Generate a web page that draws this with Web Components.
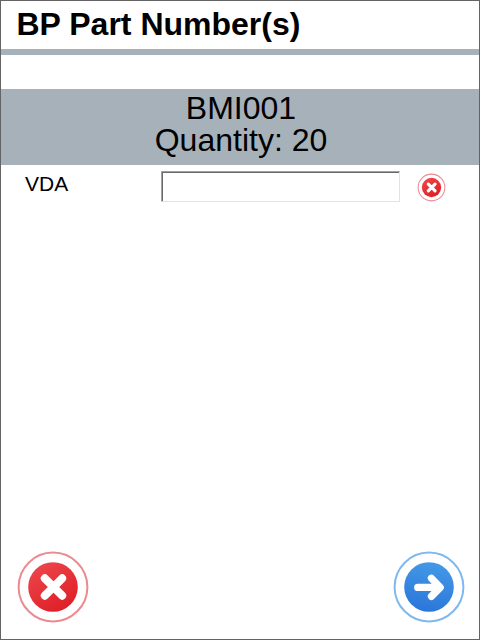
<!DOCTYPE html>
<html lang="en">
<head>
<meta charset="utf-8">
<title>BP Part Number(s)</title>
<style>
html,body{margin:0;height:100%;background:#fff}
body{font-family:"Liberation Sans",Arial,sans-serif;color:#000}
</style>
</head>
<body>
<part-screen>
  <screen-title slot="header">BP Part Number(s)</screen-title>
  <part-summary><span>BMI001</span><span>Quantity: 20</span></part-summary>
  <field-row label="VDA"></field-row>
  <round-button slot="footer" kind="cancel"></round-button>
  <round-button slot="footer" kind="next"></round-button>
</part-screen>
<script>
class Base extends HTMLElement {
  constructor() { super(); this.attachShadow({ mode: "open" }); }
  connectedCallback() { this.shadowRoot.innerHTML = this.render(); }
}
customElements.define("part-screen", class extends Base {
  render() { return `<style>
    :host{display:flex;flex-direction:column;box-sizing:border-box;width:480px;height:640px;border:1px solid #646464;background:#fff;overflow:hidden}
    main{flex:1;padding-top:34px}
    footer{display:flex;justify-content:space-between;padding:0 14px 16px 16px}
    </style><slot name="header"></slot><main><slot></slot></main><footer><slot name="footer"></slot></footer>`; }
});
customElements.define("screen-title", class extends Base {
  render() { return `<style>
    :host{display:block;box-sizing:border-box;height:54px;padding:5px 0 0 15.5px;border-bottom:6px solid #a7b1b9}
    h1{margin:0;font-size:32px;line-height:36px;font-weight:bold;white-space:nowrap}
    </style><h1><slot></slot></h1>`; }
});
customElements.define("part-summary", class extends Base {
  render() { return `<style>
    :host{display:flex;flex-direction:column;align-items:center;box-sizing:border-box;height:76px;padding:3px 0 0 2px;background:#a7b1b9;font-size:32px;line-height:32px}
    </style><slot></slot>`; }
});
customElements.define("field-row", class extends Base {
  render() { return `<style>
    :host{display:grid;grid-template-columns:136px 239px 28px;column-gap:0;padding:6px 0 0 24px;align-items:start}
    label{font-size:21px;line-height:25px}
    input{box-sizing:border-box;width:239px;height:31px;margin:0;padding:2px 4px;background:#fff;font:21px "Liberation Sans",Arial,sans-serif;outline:0;border:1px solid;border-color:#a0a0a0 #e3e3e3 #e3e3e3 #a0a0a0;border-radius:0;box-shadow:inset 1px 1px #696969}
    round-button{margin:2px 0 0 17px}
    </style><label for="f">${this.getAttribute("label")}</label><input id="f" type="text"><round-button kind="cancel" small></round-button>`; }
});
customElements.define("round-button", class extends Base {
  render() {
    const next = this.getAttribute("kind") === "next", small = this.hasAttribute("small");
    const size = small ? 29 : 72;
    const ring = next ? "#7fb8ee" : "#ec8a8f";
    const [a, b] = next ? ["#4399e6", "#2b76da"] : ["#ec474c", "#de1c25"];
    const glyph = next ? "M24.7 36.4H47M38.4 27.2L47.3 36.4L38.4 45.4" : "M27.8 27.3L45.2 44.7M45.2 27.3L27.8 44.7";
    return `<style>
    :host{display:block;width:${size}px;height:${size}px}
    button{display:block;padding:0;border:0;background:none;width:100%;height:100%}
    svg{display:block}
    </style><button aria-label="${next ? "Next" : "Cancel"}"><svg width="${size}" height="${size}" viewBox="${small ? "-1.3 -1.3 74.6 74.6" : "0 0 72 72"}">
    <defs><linearGradient id="g" x1="${next ? .6 : .2}" y1="0" x2="${next ? .4 : .8}" y2="1"><stop offset="0" stop-color="${a}"/><stop offset="1" stop-color="${b}"/></linearGradient></defs>
    <circle cx="36" cy="36" r="34.4" fill="#fff" stroke="${ring}" stroke-width="${small ? 2.6 : 2}"/>
    <circle cx="36" cy="36" r="24.8" fill="url(#g)"/>
    <path d="${glyph}" fill="none" stroke="#fff" stroke-width="${next ? 7.2 : 8}" stroke-linecap="round" stroke-linejoin="round"/></svg></button>`;
  }
});
</script>
</body>
</html>
